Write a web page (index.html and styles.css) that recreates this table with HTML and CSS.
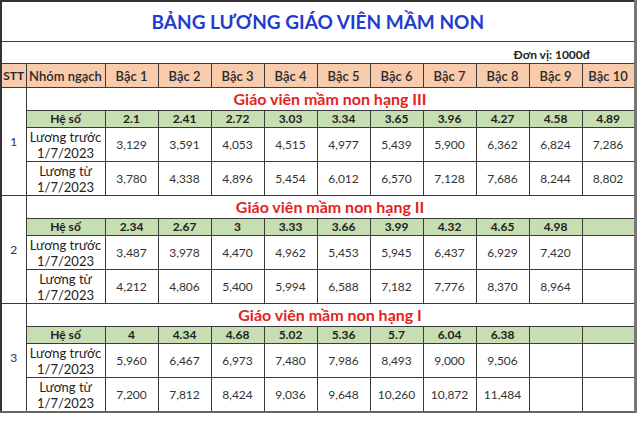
FILE: index.html
```html
<!DOCTYPE html>
<html lang="vi">
<head>
<meta charset="utf-8">
<title>Bảng lương giáo viên mầm non</title>
<link rel="stylesheet" href="styles.css">
</head>
<body>
<table class="sheet">
  <colgroup>
    <col class="c-stt"><col class="c-group">
    <col class="c-step"><col class="c-step"><col class="c-step"><col class="c-step"><col class="c-step">
    <col class="c-step"><col class="c-step"><col class="c-step"><col class="c-step"><col class="c-step">
  </colgroup>
  <tr class="r-title"><td colspan="12" class="title">BẢNG LƯƠNG GIÁO VIÊN MẦM NON</td></tr>
  <tr class="r-unit"><td colspan="12" class="unit">Đơn vị: 1000đ</td></tr>
  <tr class="r-head">
    <td class="stt-h">STT</td><td>Nhóm ngạch</td>
    <td>Bậc 1</td><td>Bậc 2</td><td>Bậc 3</td><td>Bậc 4</td><td>Bậc 5</td>
    <td>Bậc 6</td><td>Bậc 7</td><td>Bậc 8</td><td>Bậc 9</td><td>Bậc 10</td>
  </tr>

  <tr class="r-sec"><td rowspan="4" class="stt">1</td><td colspan="11" class="sec">Giáo viên mầm non hạng III</td></tr>
  <tr class="r-coef"><td>Hệ số</td><td>2.1</td><td>2.41</td><td>2.72</td><td>3.03</td><td>3.34</td><td>3.65</td><td>3.96</td><td>4.27</td><td>4.58</td><td>4.89</td></tr>
  <tr class="r-pay"><td class="lbl">Lương trước<br>1/7/2023</td><td>3,129</td><td>3,591</td><td>4,053</td><td>4,515</td><td>4,977</td><td>5,439</td><td>5,900</td><td>6,362</td><td>6,824</td><td>7,286</td></tr>
  <tr class="r-pay"><td class="lbl">Lương từ<br>1/7/2023</td><td>3,780</td><td>4,338</td><td>4,896</td><td>5,454</td><td>6,012</td><td>6,570</td><td>7,128</td><td>7,686</td><td>8,244</td><td>8,802</td></tr>

  <tr class="r-sec"><td rowspan="4" class="stt">2</td><td colspan="11" class="sec">Giáo viên mầm non hạng II</td></tr>
  <tr class="r-coef"><td>Hệ số</td><td>2.34</td><td>2.67</td><td>3</td><td>3.33</td><td>3.66</td><td>3.99</td><td>4.32</td><td>4.65</td><td>4.98</td><td></td></tr>
  <tr class="r-pay"><td class="lbl">Lương trước<br>1/7/2023</td><td>3,487</td><td>3,978</td><td>4,470</td><td>4,962</td><td>5,453</td><td>5,945</td><td>6,437</td><td>6,929</td><td>7,420</td><td></td></tr>
  <tr class="r-pay"><td class="lbl">Lương từ<br>1/7/2023</td><td>4,212</td><td>4,806</td><td>5,400</td><td>5,994</td><td>6,588</td><td>7,182</td><td>7,776</td><td>8,370</td><td>8,964</td><td></td></tr>

  <tr class="r-sec"><td rowspan="4" class="stt">3</td><td colspan="11" class="sec">Giáo viên mầm non hạng I</td></tr>
  <tr class="r-coef"><td>Hệ số</td><td>4</td><td>4.34</td><td>4.68</td><td>5.02</td><td>5.36</td><td>5.7</td><td>6.04</td><td>6.38</td><td></td><td></td></tr>
  <tr class="r-pay"><td class="lbl">Lương trước<br>1/7/2023</td><td>5,960</td><td>6,467</td><td>6,973</td><td>7,480</td><td>7,986</td><td>8,493</td><td>9,000</td><td>9,506</td><td></td><td></td></tr>
  <tr class="r-pay"><td class="lbl">Lương từ<br>1/7/2023</td><td>7,200</td><td>7,812</td><td>8,424</td><td>9,036</td><td>9,648</td><td>10,260</td><td>10,872</td><td>11,484</td><td></td><td></td></tr>
</table>
</body>
</html>
```
FILE: styles.css
```css
html, body {
  margin: 0;
  padding: 0;
  background: #ffffff;
}
body {
  width: 640px;
  height: 422px;
  overflow: hidden;
  font-family: Lato, "Noto Sans", "Liberation Sans", sans-serif;
  color: #333333;
}
.sheet {
  border-collapse: collapse;
  table-layout: fixed;
  width: 636px;
  border-top: 2px solid #333;
  border-left: 2px solid #333;
  border-right: 3px solid #777;
  border-bottom: 2px solid #666;
}
.c-stt { width: 25px; }
.c-group { width: 79px; }
.c-step { width: 53px; }

.sheet td {
  border: 1px solid #3a3a3a;
  padding: 0;
  text-align: center;
  vertical-align: middle;
  font-size: 12px;
  line-height: 14px;
  white-space: nowrap;
  overflow: hidden;
}
.r-title td { height: 39px; }
.title {
  color: #1f3ccf;
  font-weight: 700;
  font-size: 19px !important;
  line-height: 22px !important;
}
.r-unit td { height: 20px; }
.unit {
  text-align: right !important;
  vertical-align: bottom !important;
  padding-right: 44px !important;
  padding-bottom: 1px !important;
  font-weight: 700;
  font-size: 12px;
  color: #222;
}
.r-head td {
  height: 23px;
  background: #f8cbad;
  font-size: 13px;
  font-weight: 600;
  color: #2a2a2a;
}
.r-head td.stt-h { font-size: 12px; font-weight: 700; }
.r-sec td { height: 22px; }
.sec {
  color: #e3231b;
  font-weight: 700;
  font-size: 16px !important;
  line-height: 18px !important;
}
.stt { font-size: 12px; color: #333; }
.r-coef td {
  height: 16px;
  background: #c7deb2;
  font-weight: 700;
  color: #222;
}
.r-pay td { height: 33px; }
.sheet td.lbl {
  font-size: 13px;
  line-height: 16px;
  color: #222;
}
```
